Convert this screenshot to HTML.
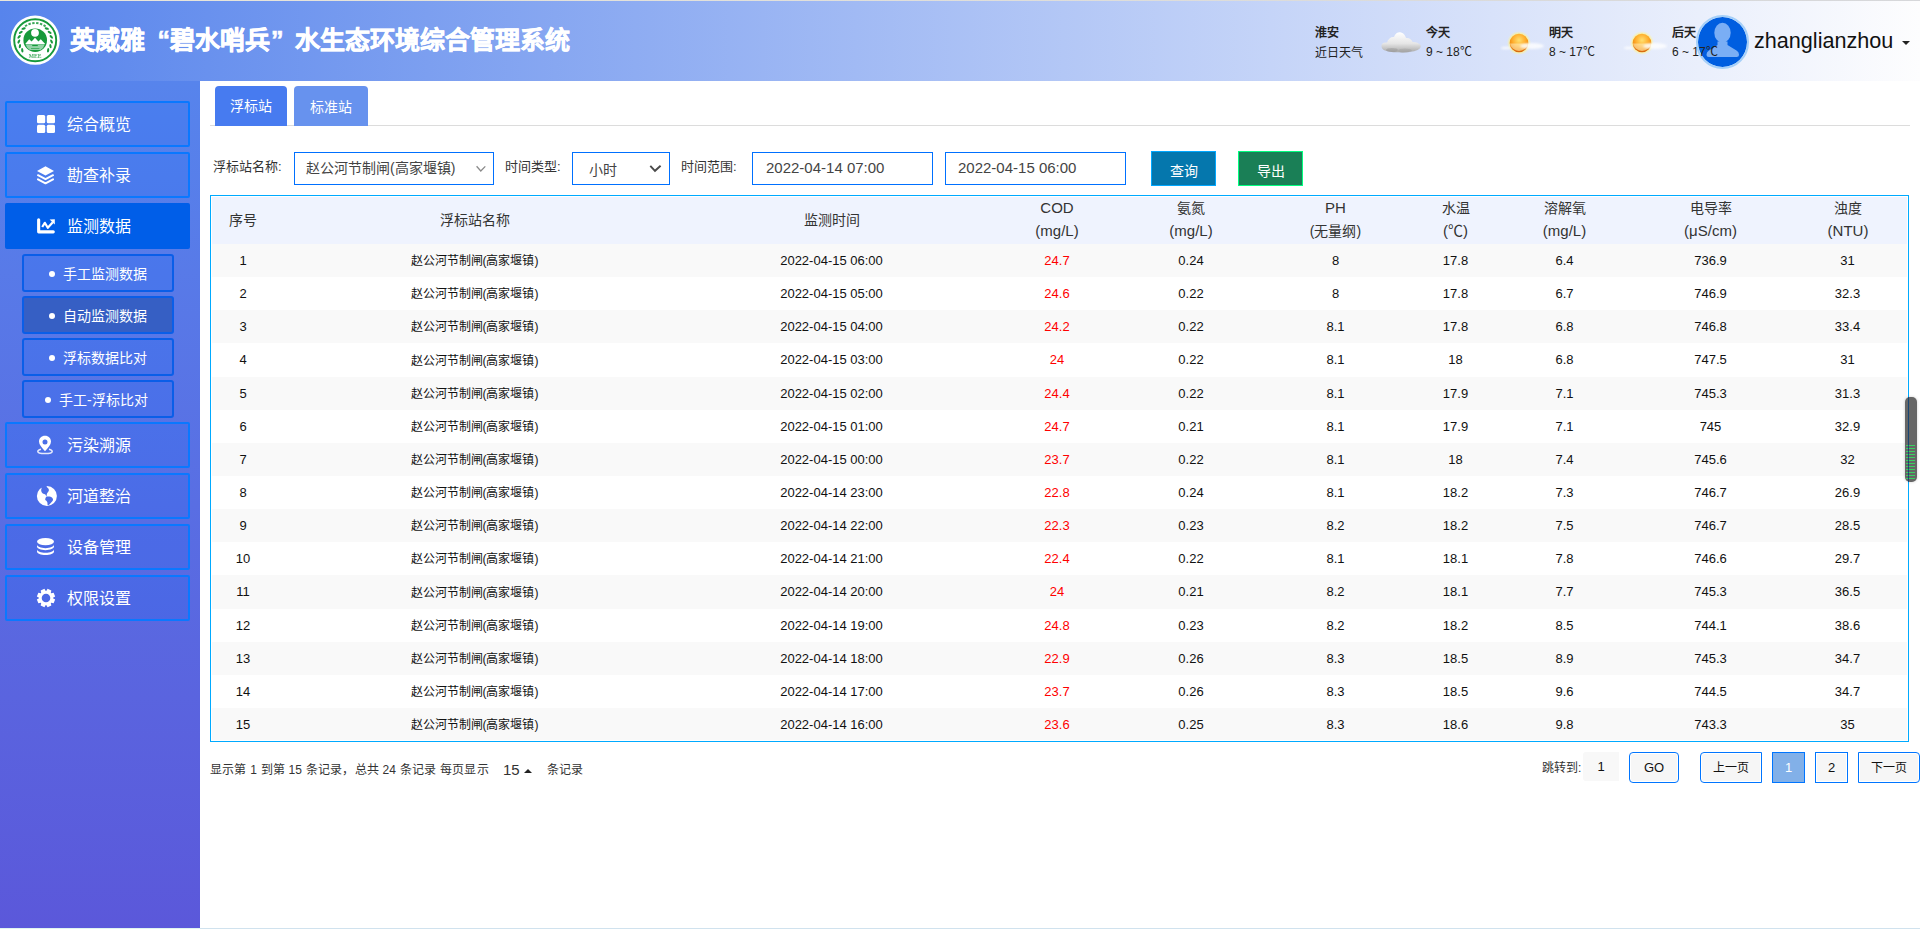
<!DOCTYPE html>
<html lang="zh-CN">
<head>
<meta charset="utf-8">
<title>英威雅“碧水哨兵”水生态环境综合管理系统</title>
<style>
*{box-sizing:border-box;margin:0;padding:0}
html,body{width:1920px;height:929px;overflow:hidden;background:#fff}
body{position:relative;font-family:"Liberation Sans",sans-serif;color:#333}
.abs{position:absolute}
#topline{position:absolute;left:0;top:0;width:1920px;height:1px;background:linear-gradient(90deg,#e9e6da,#d6d7da)}
#header{position:absolute;left:0;top:1px;width:1920px;height:80px;background:linear-gradient(90deg,#5784ec,#fdfdfe)}
#title{position:absolute;left:70px;top:21px;height:36px;line-height:36px;font-size:25px;font-weight:bold;-webkit-text-stroke:0.6px #fff;color:#fff;white-space:nowrap}
#title .q{display:inline-block;width:25px;text-align:right}
#title .q2{display:inline-block;width:25px;text-align:left;padding-left:1px}
.wt{position:absolute;font-size:12px;color:#222;white-space:nowrap;line-height:16px}
.wt b{font-weight:bold}
#avatar{position:absolute;left:1695.5px;top:15px;width:53.5px;height:53.5px;border-radius:50%;background:#005ee0;border:2px solid #a6d0f8;background-clip:padding-box}
#uname{position:absolute;left:1754px;top:27px;font-size:21.6px;line-height:28px;color:#111;white-space:nowrap}
#caret{position:absolute;left:1902px;top:41px;width:0;height:0;border-left:4.5px solid transparent;border-right:4.5px solid transparent;border-top:4px solid #222}
#sidebar{position:absolute;left:0;top:81px;width:200px;height:847px;background:linear-gradient(180deg,#5784ec,#5b58da)}
.mi{position:absolute;left:5px;width:185px;height:46px;border:2px solid #0a78ff;border-radius:2px;background:rgba(0,100,255,0.15);color:#fff;font-size:16px}
.mi.act{background:#005ee8;border-color:#005ee8}
.mi .tx{position:absolute;left:60px;top:1px;line-height:42px;white-space:nowrap}
.mi svg{position:absolute;left:30px;top:10px}
.si{position:absolute;left:22px;width:152px;height:38px;border:2px solid #0a5ee8;border-radius:3px;background:rgba(0,100,255,0.15);color:#fff;font-size:14px}
.si.act{background:#365fc4}
.si .tx{position:absolute;left:39px;top:1px;line-height:34px;white-space:nowrap}
.si .dot{position:absolute;left:25px;top:15px;width:6px;height:6px;border-radius:50%;background:#fff}
#bottomline{position:absolute;left:0;top:928px;width:1920px;height:1px;background:#d0e2ee}
#bottomline .l{position:absolute;left:0;top:0;width:200px;height:1px;background:#e0f4f0}
.tab{position:absolute;top:86px;height:40px;border-radius:4px 4px 0 0;color:#fff;font-size:14px;text-align:center;line-height:40px}
#tabline{position:absolute;left:210px;top:125px;width:1700px;height:1px;background:#dcdcdc}
.lbl{position:absolute;font-size:13px;color:#333;line-height:20px;white-space:nowrap;margin-top:1px}
.box{position:absolute;top:152px;height:33px;border:1px solid #0070ff;background:#fff;color:#444;white-space:nowrap}
.btn{position:absolute;top:151px;height:35px;color:#fff;font-size:14px;text-align:center;line-height:33px;padding-top:3px}
#table{position:absolute;left:210px;top:195px;width:1699px;height:547px;border:1px solid #00aaff;background:#fff;overflow:hidden}
#thead{position:absolute;left:212px;top:197px;width:1695px;height:47px;background:#eff3fe}
.th1{position:absolute;top:0;height:47px;line-height:46px;text-align:center;font-size:14px;color:#333;white-space:nowrap}
.th2{position:absolute;top:0;height:48px;text-align:center;font-size:14px;color:#333;white-space:nowrap}
.th2 .l1{position:absolute;left:0;right:0;top:-1px;line-height:24px;font-size:15px}
.th2 .l2{position:absolute;left:0;right:0;top:22px;line-height:24px;font-size:15px}
.tr{position:absolute;left:0;width:1695px}
.td{position:absolute;top:0;text-align:center;font-size:13px;color:#111;white-space:nowrap}
.td.cj{font-size:12px;margin-top:1px}
.td.red{color:#f00}
.pg{position:absolute;font-size:12px;color:#333;white-space:nowrap;line-height:20px}
.pb{position:absolute;top:752px;height:31px;border:1px solid #0075ff;box-shadow:inset 0 0 0 1px #fff;background:#f6f6f6;font-size:12px;color:#111;text-align:center;line-height:30px}
#scrollw{position:absolute;left:1905px;top:397px;width:12px;height:85px;border-radius:5px;background:#666;box-shadow:0 0 3px rgba(0,0,0,0.2)}
</style>
</head>
<body>
<div id="topline"></div>
<div id="header">
  <svg class="abs" style="left:10px;top:14px" width="50" height="50" viewBox="0 0 50 50"><circle cx="25.2" cy="25.2" r="24.6" fill="#fff"/><circle cx="25.2" cy="25.2" r="21" fill="none" stroke="#17993b" stroke-width="1.9"/><circle cx="25.2" cy="25.2" r="11.8" fill="#17993b"/><circle cx="25" cy="17.8" r="3.9" fill="#fff"/><path d="M15.2 28.9 L19.2 24.2 L21.6 26.6 L25 22.8 L28.4 26.6 L30.8 24.2 L35.2 28.9 Z" fill="#fff"/><path d="M15.6 29.2 L34.8 29.2 Q33.5 33.5 30.5 35 L19.8 35 Q16.8 33.5 15.6 29.2 Z" fill="#94d3a8"/><rect x="22.2" y="30" width="5.6" height="1.1" fill="#17993b"/><rect x="21" y="33" width="8.4" height="1" fill="#17993b" opacity="0.6"/><rect x="14.89" y="9.61" width="2.4" height="2" transform="rotate(328.0 16.09 10.61)" fill="#17993b" opacity="0.85"/><rect x="18.40" y="7.94" width="2.4" height="2" transform="rotate(341.0 19.60 8.94)" fill="#17993b" opacity="0.85"/><rect x="22.20" y="7.09" width="2.4" height="2" transform="rotate(354.0 23.40 8.09)" fill="#17993b" opacity="0.85"/><rect x="26.10" y="7.13" width="2.4" height="2" transform="rotate(367.0 27.30 8.13)" fill="#17993b" opacity="0.85"/><rect x="29.88" y="8.04" width="2.4" height="2" transform="rotate(380.0 31.08 9.04)" fill="#17993b" opacity="0.85"/><rect x="33.37" y="9.77" width="2.4" height="2" transform="rotate(393.0 34.57 10.77)" fill="#17993b" opacity="0.85"/><ellipse cx="12.28" cy="35.30" rx="2.2" ry="1.1" transform="rotate(262.0 12.28 35.30)" fill="#17993b"/><ellipse cx="9.93" cy="31.18" rx="2.2" ry="1.1" transform="rotate(278.6 9.93 31.18)" fill="#17993b"/><ellipse cx="8.86" cy="26.57" rx="2.2" ry="1.1" transform="rotate(295.2 8.86 26.57)" fill="#17993b"/><ellipse cx="9.15" cy="21.85" rx="2.2" ry="1.1" transform="rotate(311.8 9.15 21.85)" fill="#17993b"/><ellipse cx="10.77" cy="17.40" rx="2.2" ry="1.1" transform="rotate(328.4 10.77 17.40)" fill="#17993b"/><ellipse cx="13.60" cy="13.60" rx="2.2" ry="1.1" transform="rotate(345.0 13.60 13.60)" fill="#17993b"/><ellipse cx="38.12" cy="35.30" rx="2.2" ry="1.1" transform="rotate(98.0 38.12 35.30)" fill="#17993b"/><ellipse cx="40.47" cy="31.18" rx="2.2" ry="1.1" transform="rotate(81.4 40.47 31.18)" fill="#17993b"/><ellipse cx="41.54" cy="26.57" rx="2.2" ry="1.1" transform="rotate(64.8 41.54 26.57)" fill="#17993b"/><ellipse cx="41.25" cy="21.85" rx="2.2" ry="1.1" transform="rotate(48.2 41.25 21.85)" fill="#17993b"/><ellipse cx="39.63" cy="17.40" rx="2.2" ry="1.1" transform="rotate(31.6 39.63 17.40)" fill="#17993b"/><ellipse cx="36.80" cy="13.60" rx="2.2" ry="1.1" transform="rotate(15.0 36.80 13.60)" fill="#17993b"/><text x="25.2" y="42.6" font-size="5.6" font-family="Liberation Serif" font-weight="bold" text-anchor="middle" fill="#17993b" opacity="0.8">MEE</text></svg>
  <div id="title">英威雅<span class="q">“</span>碧水哨兵<span class="q2">”</span>水生态环境综合管理系统</div>
</div>
<!-- weather -->
<div class="wt" style="left:1315px;top:25px"><b>淮安</b></div>
<div class="wt" style="left:1315px;top:45px">近日天气</div>
<svg class="abs" style="left:1378px;top:28px" width="46" height="28" viewBox="0 0 46 28">
  <defs>
    <linearGradient id="cg" x1="0" y1="0" x2="0" y2="1"><stop offset="0" stop-color="#ffffff"/><stop offset="0.55" stop-color="#e6e6e6"/><stop offset="1" stop-color="#a8a8a8"/></linearGradient>
    <filter id="bl" x="-20%" y="-20%" width="140%" height="140%"><feGaussianBlur stdDeviation="0.55"/></filter>
  </defs>
  <g filter="url(#bl)" fill="url(#cg)">
  <path d="M3.5 18.5 C3 15.5 6 14 9 14.5 C10 10.5 13.5 8.5 16 9 C17.5 5 20.5 3.8 23 4.5 C26 5.2 27.5 8 28 10 C31 9.5 34 11.5 34.5 14 C38 14 42.5 15.5 42.8 18 C43 21 38 23.5 32 23.8 C28 24.5 25 24.8 21 24.2 C16 24.5 11 24 7 22.5 C4.5 21.5 3.6 20 3.5 18.5 Z"/>
  </g>
  <g filter="url(#bl)" opacity="0.35"><ellipse cx="14" cy="22" rx="6" ry="2" fill="#888"/><ellipse cx="27" cy="22.5" rx="7" ry="2" fill="#999"/></g>
</svg>
<div class="wt" style="left:1426px;top:25px"><b>今天</b></div>
<div class="wt" style="left:1426px;top:44px">9 ~ 18℃</div>
<svg class="abs" style="left:1500px;top:30px" width="48" height="26" viewBox="0 0 48 26">
  <defs>
    <radialGradient id="sg" cx="50%" cy="35%" r="60%"><stop offset="0" stop-color="#ffe070"/><stop offset="0.55" stop-color="#ffb030"/><stop offset="0.9" stop-color="#f08a10"/><stop offset="1" stop-color="#d86a10"/></radialGradient>
    <radialGradient id="sglow" cx="50%" cy="50%" r="50%"><stop offset="0.7" stop-color="#fff080" stop-opacity="1"/><stop offset="1" stop-color="#fff6a0" stop-opacity="0"/></radialGradient>
    <filter id="bl2" x="-30%" y="-30%" width="160%" height="160%"><feGaussianBlur stdDeviation="1"/></filter>
  </defs>
  <circle cx="19" cy="13" r="12" fill="url(#sglow)"/>
  <circle cx="19" cy="13" r="9.3" fill="url(#sg)"/>
  <path d="M9.9 13.5 L28.1 13.5 A9.3 9.3 0 0 1 9.9 13.5 Z" fill="#fff6d0" opacity="0.5"/>
  <g filter="url(#bl2)" opacity="0.8"><ellipse cx="32" cy="16" rx="12" ry="3" fill="#fff"/><ellipse cx="6" cy="18" rx="5" ry="1.2" fill="#fff"/></g>
</svg>
<div class="wt" style="left:1549px;top:25px"><b>明天</b></div>
<div class="wt" style="left:1549px;top:44px">8 ~ 17℃</div>
<svg class="abs" style="left:1623px;top:30px" width="48" height="26" viewBox="0 0 48 26">
  <circle cx="19" cy="13" r="12" fill="url(#sglow)"/>
  <circle cx="19" cy="13" r="9.3" fill="url(#sg)"/>
  <path d="M9.9 13.5 L28.1 13.5 A9.3 9.3 0 0 1 9.9 13.5 Z" fill="#fff6d0" opacity="0.5"/>
  <g filter="url(#bl2)" opacity="0.8"><ellipse cx="32" cy="16" rx="12" ry="3" fill="#fff"/><ellipse cx="6" cy="18" rx="5" ry="1.2" fill="#fff"/></g>
</svg>
<div id="avatar">
  <svg class="abs" style="left:0.3px;top:0px" width="50" height="50" viewBox="0 0 50 50">
    <ellipse cx="24.5" cy="15.8" rx="8.2" ry="10" fill="#7aaef5"/>
    <path d="M19.5 24.5 L19.5 28 L11 33.5 Q8.5 35 8.5 37.5 Q8.5 40 11 40 L38.5 40 Q41 40 41 37.5 Q41 35 38.5 33.5 L29.5 28 L29.5 24.5 Z" fill="#7aaef5"/>
  </svg>
</div>
<div class="wt" style="left:1672px;top:25px"><b>后天</b></div>
<div class="wt" style="left:1672px;top:44px">6 ~ 17℃</div>
<div id="uname">zhanglianzhou</div>
<div id="caret"></div>

<div id="sidebar"></div>
<div class="mi" style="top:101px">
  <svg width="19" height="19" viewBox="0 0 19 19" style="left:30px;top:12px"><rect x="0" y="0" width="8.2" height="8.2" rx="1.5" fill="#fff"/><rect x="9.8" y="0" width="8.2" height="8.2" rx="1.5" fill="#fff"/><rect x="0" y="9.8" width="8.2" height="8.2" rx="1.5" fill="#fff"/><rect x="9.8" y="9.8" width="8.2" height="8.2" rx="1.5" fill="#fff"/></svg>
  <div class="tx">综合概览</div>
</div>
<div class="mi" style="top:152px">
  <svg width="19" height="19" viewBox="0 0 19 19" style="left:30px;top:12px"><path d="M8.5 0.2 L17 4.9 L8.5 9.6 L0 4.9 Z" fill="#fff"/><path d="M1 9.2 L8.5 13.2 L16 9.2" stroke="#fff" stroke-width="2" fill="none" stroke-linejoin="round" stroke-linecap="round"/><path d="M1 13.3 L8.5 17.3 L16 13.3" stroke="#fff" stroke-width="2" fill="none" stroke-linejoin="round" stroke-linecap="round"/></svg>
  <div class="tx">勘查补录</div>
</div>
<div class="mi act" style="top:203px">
  <svg width="19" height="19" viewBox="0 0 19 19" style="left:30px;top:13px"><path d="M1.65 1.8 L1.65 13.85 L16.3 13.85" stroke="#fff" stroke-width="3.1" fill="none" stroke-linecap="round" stroke-linejoin="round"/><path d="M5.2 9 L7.8 4.8 L10.8 9.8 L15.8 4.2" stroke="#fff" stroke-width="2.2" fill="none" stroke-linejoin="round"/><path d="M12.6 1.6 L17.8 1.2 L17.8 6.6 Z" fill="#fff"/></svg>
  <div class="tx">监测数据</div>
</div>
<div class="si" style="top:254px"><div class="dot"></div><div class="tx">手工监测数据</div></div>
<div class="si act" style="top:296px"><div class="dot"></div><div class="tx">自动监测数据</div></div>
<div class="si" style="top:338px"><div class="dot"></div><div class="tx">浮标数据比对</div></div>
<div class="si" style="top:380px"><div class="dot" style="left:21px"></div><div class="tx" style="left:35px">手工-浮标比对</div></div>
<div class="mi" style="top:422px">
  <svg width="19" height="22" viewBox="0 0 19 22" style="left:30px;top:11px"><path d="M8 0.8 C4.4 0.8 2 3.4 2 6.6 C2 9.8 5 13 8 16.2 C11 13 14 9.8 14 6.6 C14 3.4 11.6 0.8 8 0.8 Z M8 4.5 A2.5 2.5 0 1 1 8 9.5 A2.5 2.5 0 1 1 8 4.5 Z" fill="#fff" fill-rule="evenodd"/><path d="M4 14.3 C1.8 14.8 0.8 15.5 0.8 16.5 C0.8 17.8 4 18.6 8 18.6 C12 18.6 15.2 17.8 15.2 16.5 C15.2 15.5 14.2 14.8 12 14.3" stroke="rgba(255,255,255,0.85)" stroke-width="1.5" fill="none"/></svg>
  <div class="tx">污染溯源</div>
</div>
<div class="mi" style="top:473px">
  <svg width="22" height="22" viewBox="0 0 22 22" style="left:29px;top:11px"><defs><mask id="gm"><rect x="0" y="0" width="22" height="22" fill="#000"/><circle cx="10.9" cy="10" r="10" fill="#fff"/><path d="M4 -1 L5.7 2 C5 3.5 4.8 5.5 6.5 7.2 C7.5 8 8.8 7.9 9.6 8.8 C10.1 9.6 10.2 10.5 10.3 11 C10.7 10 10.6 9 10.9 7.8 C11.3 6.5 12.8 5.5 12.9 4.2 C12.9 3 12 2.3 11.3 1.6 C10.8 1 10.5 0.6 10.6 -1 Z" fill="#000"/><path d="M10.2 11 C11.2 10.3 12.3 10.4 13.5 10.6 C14.8 10.9 16.5 11.6 17 13.2 C17.2 14.5 16.1 15.5 15.2 16.4 C14.3 17.3 13.6 18.5 12.2 19.2 C11.5 19.4 11.4 18.2 11.5 17.3 C11.5 16.3 10.8 15.3 10 14.6 C9.3 14 9 13.2 9.4 12.4 C9.6 11.8 9.9 11.3 10.2 11 Z" fill="#000"/></mask></defs><rect x="0" y="0" width="22" height="22" fill="#fff" mask="url(#gm)"/></svg>
  <div class="tx">河道整治</div>
</div>
<div class="mi" style="top:524px">
  <svg width="19" height="19" viewBox="0 0 19 19" style="left:30px;top:12px"><ellipse cx="8.5" cy="3.6" rx="8.5" ry="3.6" fill="#fff"/><path d="M0 6.6 C0 8.6 3.8 10.2 8.5 10.2 C13.2 10.2 17 8.6 17 6.6 L17 8.6 C17 10.6 13.2 12.2 8.5 12.2 C3.8 12.2 0 10.6 0 8.6 Z" fill="#fff"/><path d="M0 11.2 C0 13.2 3.8 14.8 8.5 14.8 C13.2 14.8 17 13.2 17 11.2 L17 13.4 C17 15.4 13.2 17 8.5 17 C3.8 17 0 15.4 0 13.4 Z" fill="#fff"/></svg>
  <div class="tx">设备管理</div>
</div>
<div class="mi" style="top:575px">
  <svg width="20" height="20" viewBox="0 0 20 20" style="left:29px;top:11px"><path id="gear" fill="#fff" fill-rule="evenodd" d="M17.00 10.23 L19.16 11.60 L17.61 15.35 L15.11 14.79 L14.95 14.95 L14.79 15.11 L15.35 17.61 L11.60 19.16 L10.23 17.00 L10.00 17.00 L9.77 17.00 L8.40 19.16 L4.65 17.61 L5.21 15.11 L5.05 14.95 L4.89 14.79 L2.39 15.35 L0.84 11.60 L3.00 10.23 L3.00 10.00 L3.00 9.77 L0.84 8.40 L2.39 4.65 L4.89 5.21 L5.05 5.05 L5.21 4.89 L4.65 2.39 L8.40 0.84 L9.77 3.00 L10.00 3.00 L10.23 3.00 L11.60 0.84 L15.35 2.39 L14.79 4.89 L14.95 5.05 L15.11 5.21 L17.61 4.65 L19.16 8.40 L17.00 9.77 L17.00 10.00 Z M14.3 10 A4.3 4.3 0 1 0 5.7 10 A4.3 4.3 0 1 0 14.3 10 Z"/></svg>
  <div class="tx">权限设置</div>
</div>
<div id="bottomline"><div class="l"></div></div>

<!-- main -->
<div class="tab" style="left:215px;width:72px;background:#477bf0">浮标站</div>
<div class="tab" style="left:294px;width:74px;background:#6792ee;line-height:42px">标准站</div>
<div id="tabline"></div>
<div class="tab" style="left:215px;width:72px;background:#477bf0;top:124px;height:2px;border-radius:0"></div>
<div class="tab" style="left:294px;width:74px;background:#6792ee;top:124px;height:2px;border-radius:0"></div>

<div class="lbl" style="left:213px;top:156px">浮标站名称:</div>
<div class="box" style="left:294px;width:200px;font-size:14px;line-height:30px;padding-left:11px">赵公河节制闸(高家堰镇)
  <svg class="abs" style="left:181px;top:11px" width="12" height="8" viewBox="0 0 12 8"><path d="M0.6 2.3 L4.8 7 L9.3 2.4" stroke="#8a8a8a" stroke-width="1.3" fill="none"/></svg>
</div>
<div class="lbl" style="left:505px;top:156px">时间类型:</div>
<div class="box" style="left:572px;width:98px;font-size:14px;line-height:35px;padding-left:16px">小时
  <svg class="abs" style="left:75px;top:11px" width="14" height="10" viewBox="0 0 14 10"><path d="M2.3 1.8 L7 6.8 L12.6 1.8" stroke="#4a4a4a" stroke-width="1.9" fill="none"/></svg>
</div>
<div class="lbl" style="left:681px;top:156px">时间范围:</div>
<div class="box" style="left:752px;width:181px;font-size:15px;line-height:30px;padding-left:13px">2022-04-14 07:00</div>
<div class="box" style="left:945px;width:181px;font-size:15px;line-height:30px;padding-left:12px">2022-04-15 06:00</div>
<div class="btn" style="left:1151px;width:65px;background:#0577ad;border:1px solid #00a8ff">查询</div>
<div class="btn" style="left:1238px;width:65px;background:#1a7f56;border:1px solid #00ff80">导出</div>

<div id="table">
</div>
<div id="thead">
<div class="th1" style="left:0px;width:62px">序号</div>
<div class="th1" style="left:62px;width:401px">浮标站名称</div>
<div class="th1" style="left:463px;width:313px">监测时间</div>
<div class="th2" style="left:776px;width:138px"><div class="l1">COD</div><div class="l2">(mg/L)</div></div>
<div class="th2" style="left:914px;width:130px"><div class="l1" style="font-size:14px">氨氮</div><div class="l2">(mg/L)</div></div>
<div class="th2" style="left:1044px;width:159px"><div class="l1">PH</div><div class="l2" style="font-size:14px">(无量纲)</div></div>
<div class="th2" style="left:1203px;width:81px"><div class="l1" style="font-size:14px">水温</div><div class="l2">(℃)</div></div>
<div class="th2" style="left:1284px;width:137px"><div class="l1" style="font-size:14px">溶解氧</div><div class="l2">(mg/L)</div></div>
<div class="th2" style="left:1421px;width:155px"><div class="l1" style="font-size:14px">电导率</div><div class="l2">(μS/cm)</div></div>
<div class="th2" style="left:1576px;width:120px"><div class="l1" style="font-size:14px">浊度</div><div class="l2">(NTU)</div></div>
</div>
<div style="position:absolute;left:212px;top:244px;width:1695px;height:496px;overflow:hidden">
<div class="tr" style="top:0px;height:33px;background:#f9f9f9">
<div class="td" style="left:0px;width:62px;line-height:33px">1</div>
<div class="td cj" style="left:62px;width:401px;line-height:33px">赵公河节制闸(高家堰镇)</div>
<div class="td" style="left:463px;width:313px;line-height:33px">2022-04-15 06:00</div>
<div class="td red" style="left:776px;width:138px;line-height:33px">24.7</div>
<div class="td" style="left:914px;width:130px;line-height:33px">0.24</div>
<div class="td" style="left:1044px;width:159px;line-height:33px">8</div>
<div class="td" style="left:1203px;width:81px;line-height:33px">17.8</div>
<div class="td" style="left:1284px;width:137px;line-height:33px">6.4</div>
<div class="td" style="left:1421px;width:155px;line-height:33px">736.9</div>
<div class="td" style="left:1576px;width:119px;line-height:33px">31</div>
</div>
<div class="tr" style="top:33px;height:33px;background:#ffffff">
<div class="td" style="left:0px;width:62px;line-height:33px">2</div>
<div class="td cj" style="left:62px;width:401px;line-height:33px">赵公河节制闸(高家堰镇)</div>
<div class="td" style="left:463px;width:313px;line-height:33px">2022-04-15 05:00</div>
<div class="td red" style="left:776px;width:138px;line-height:33px">24.6</div>
<div class="td" style="left:914px;width:130px;line-height:33px">0.22</div>
<div class="td" style="left:1044px;width:159px;line-height:33px">8</div>
<div class="td" style="left:1203px;width:81px;line-height:33px">17.8</div>
<div class="td" style="left:1284px;width:137px;line-height:33px">6.7</div>
<div class="td" style="left:1421px;width:155px;line-height:33px">746.9</div>
<div class="td" style="left:1576px;width:119px;line-height:33px">32.3</div>
</div>
<div class="tr" style="top:66px;height:33px;background:#f9f9f9">
<div class="td" style="left:0px;width:62px;line-height:33px">3</div>
<div class="td cj" style="left:62px;width:401px;line-height:33px">赵公河节制闸(高家堰镇)</div>
<div class="td" style="left:463px;width:313px;line-height:33px">2022-04-15 04:00</div>
<div class="td red" style="left:776px;width:138px;line-height:33px">24.2</div>
<div class="td" style="left:914px;width:130px;line-height:33px">0.22</div>
<div class="td" style="left:1044px;width:159px;line-height:33px">8.1</div>
<div class="td" style="left:1203px;width:81px;line-height:33px">17.8</div>
<div class="td" style="left:1284px;width:137px;line-height:33px">6.8</div>
<div class="td" style="left:1421px;width:155px;line-height:33px">746.8</div>
<div class="td" style="left:1576px;width:119px;line-height:33px">33.4</div>
</div>
<div class="tr" style="top:99px;height:34px;background:#ffffff">
<div class="td" style="left:0px;width:62px;line-height:34px">4</div>
<div class="td cj" style="left:62px;width:401px;line-height:34px">赵公河节制闸(高家堰镇)</div>
<div class="td" style="left:463px;width:313px;line-height:34px">2022-04-15 03:00</div>
<div class="td red" style="left:776px;width:138px;line-height:34px">24</div>
<div class="td" style="left:914px;width:130px;line-height:34px">0.22</div>
<div class="td" style="left:1044px;width:159px;line-height:34px">8.1</div>
<div class="td" style="left:1203px;width:81px;line-height:34px">18</div>
<div class="td" style="left:1284px;width:137px;line-height:34px">6.8</div>
<div class="td" style="left:1421px;width:155px;line-height:34px">747.5</div>
<div class="td" style="left:1576px;width:119px;line-height:34px">31</div>
</div>
<div class="tr" style="top:133px;height:33px;background:#f9f9f9">
<div class="td" style="left:0px;width:62px;line-height:33px">5</div>
<div class="td cj" style="left:62px;width:401px;line-height:33px">赵公河节制闸(高家堰镇)</div>
<div class="td" style="left:463px;width:313px;line-height:33px">2022-04-15 02:00</div>
<div class="td red" style="left:776px;width:138px;line-height:33px">24.4</div>
<div class="td" style="left:914px;width:130px;line-height:33px">0.22</div>
<div class="td" style="left:1044px;width:159px;line-height:33px">8.1</div>
<div class="td" style="left:1203px;width:81px;line-height:33px">17.9</div>
<div class="td" style="left:1284px;width:137px;line-height:33px">7.1</div>
<div class="td" style="left:1421px;width:155px;line-height:33px">745.3</div>
<div class="td" style="left:1576px;width:119px;line-height:33px">31.3</div>
</div>
<div class="tr" style="top:166px;height:33px;background:#ffffff">
<div class="td" style="left:0px;width:62px;line-height:33px">6</div>
<div class="td cj" style="left:62px;width:401px;line-height:33px">赵公河节制闸(高家堰镇)</div>
<div class="td" style="left:463px;width:313px;line-height:33px">2022-04-15 01:00</div>
<div class="td red" style="left:776px;width:138px;line-height:33px">24.7</div>
<div class="td" style="left:914px;width:130px;line-height:33px">0.21</div>
<div class="td" style="left:1044px;width:159px;line-height:33px">8.1</div>
<div class="td" style="left:1203px;width:81px;line-height:33px">17.9</div>
<div class="td" style="left:1284px;width:137px;line-height:33px">7.1</div>
<div class="td" style="left:1421px;width:155px;line-height:33px">745</div>
<div class="td" style="left:1576px;width:119px;line-height:33px">32.9</div>
</div>
<div class="tr" style="top:199px;height:33px;background:#f9f9f9">
<div class="td" style="left:0px;width:62px;line-height:33px">7</div>
<div class="td cj" style="left:62px;width:401px;line-height:33px">赵公河节制闸(高家堰镇)</div>
<div class="td" style="left:463px;width:313px;line-height:33px">2022-04-15 00:00</div>
<div class="td red" style="left:776px;width:138px;line-height:33px">23.7</div>
<div class="td" style="left:914px;width:130px;line-height:33px">0.22</div>
<div class="td" style="left:1044px;width:159px;line-height:33px">8.1</div>
<div class="td" style="left:1203px;width:81px;line-height:33px">18</div>
<div class="td" style="left:1284px;width:137px;line-height:33px">7.4</div>
<div class="td" style="left:1421px;width:155px;line-height:33px">745.6</div>
<div class="td" style="left:1576px;width:119px;line-height:33px">32</div>
</div>
<div class="tr" style="top:232px;height:33px;background:#ffffff">
<div class="td" style="left:0px;width:62px;line-height:33px">8</div>
<div class="td cj" style="left:62px;width:401px;line-height:33px">赵公河节制闸(高家堰镇)</div>
<div class="td" style="left:463px;width:313px;line-height:33px">2022-04-14 23:00</div>
<div class="td red" style="left:776px;width:138px;line-height:33px">22.8</div>
<div class="td" style="left:914px;width:130px;line-height:33px">0.24</div>
<div class="td" style="left:1044px;width:159px;line-height:33px">8.1</div>
<div class="td" style="left:1203px;width:81px;line-height:33px">18.2</div>
<div class="td" style="left:1284px;width:137px;line-height:33px">7.3</div>
<div class="td" style="left:1421px;width:155px;line-height:33px">746.7</div>
<div class="td" style="left:1576px;width:119px;line-height:33px">26.9</div>
</div>
<div class="tr" style="top:265px;height:33px;background:#f9f9f9">
<div class="td" style="left:0px;width:62px;line-height:33px">9</div>
<div class="td cj" style="left:62px;width:401px;line-height:33px">赵公河节制闸(高家堰镇)</div>
<div class="td" style="left:463px;width:313px;line-height:33px">2022-04-14 22:00</div>
<div class="td red" style="left:776px;width:138px;line-height:33px">22.3</div>
<div class="td" style="left:914px;width:130px;line-height:33px">0.23</div>
<div class="td" style="left:1044px;width:159px;line-height:33px">8.2</div>
<div class="td" style="left:1203px;width:81px;line-height:33px">18.2</div>
<div class="td" style="left:1284px;width:137px;line-height:33px">7.5</div>
<div class="td" style="left:1421px;width:155px;line-height:33px">746.7</div>
<div class="td" style="left:1576px;width:119px;line-height:33px">28.5</div>
</div>
<div class="tr" style="top:298px;height:33px;background:#ffffff">
<div class="td" style="left:0px;width:62px;line-height:33px">10</div>
<div class="td cj" style="left:62px;width:401px;line-height:33px">赵公河节制闸(高家堰镇)</div>
<div class="td" style="left:463px;width:313px;line-height:33px">2022-04-14 21:00</div>
<div class="td red" style="left:776px;width:138px;line-height:33px">22.4</div>
<div class="td" style="left:914px;width:130px;line-height:33px">0.22</div>
<div class="td" style="left:1044px;width:159px;line-height:33px">8.1</div>
<div class="td" style="left:1203px;width:81px;line-height:33px">18.1</div>
<div class="td" style="left:1284px;width:137px;line-height:33px">7.8</div>
<div class="td" style="left:1421px;width:155px;line-height:33px">746.6</div>
<div class="td" style="left:1576px;width:119px;line-height:33px">29.7</div>
</div>
<div class="tr" style="top:331px;height:34px;background:#f9f9f9">
<div class="td" style="left:0px;width:62px;line-height:34px">11</div>
<div class="td cj" style="left:62px;width:401px;line-height:34px">赵公河节制闸(高家堰镇)</div>
<div class="td" style="left:463px;width:313px;line-height:34px">2022-04-14 20:00</div>
<div class="td red" style="left:776px;width:138px;line-height:34px">24</div>
<div class="td" style="left:914px;width:130px;line-height:34px">0.21</div>
<div class="td" style="left:1044px;width:159px;line-height:34px">8.2</div>
<div class="td" style="left:1203px;width:81px;line-height:34px">18.1</div>
<div class="td" style="left:1284px;width:137px;line-height:34px">7.7</div>
<div class="td" style="left:1421px;width:155px;line-height:34px">745.3</div>
<div class="td" style="left:1576px;width:119px;line-height:34px">36.5</div>
</div>
<div class="tr" style="top:365px;height:33px;background:#ffffff">
<div class="td" style="left:0px;width:62px;line-height:33px">12</div>
<div class="td cj" style="left:62px;width:401px;line-height:33px">赵公河节制闸(高家堰镇)</div>
<div class="td" style="left:463px;width:313px;line-height:33px">2022-04-14 19:00</div>
<div class="td red" style="left:776px;width:138px;line-height:33px">24.8</div>
<div class="td" style="left:914px;width:130px;line-height:33px">0.23</div>
<div class="td" style="left:1044px;width:159px;line-height:33px">8.2</div>
<div class="td" style="left:1203px;width:81px;line-height:33px">18.2</div>
<div class="td" style="left:1284px;width:137px;line-height:33px">8.5</div>
<div class="td" style="left:1421px;width:155px;line-height:33px">744.1</div>
<div class="td" style="left:1576px;width:119px;line-height:33px">38.6</div>
</div>
<div class="tr" style="top:398px;height:33px;background:#f9f9f9">
<div class="td" style="left:0px;width:62px;line-height:33px">13</div>
<div class="td cj" style="left:62px;width:401px;line-height:33px">赵公河节制闸(高家堰镇)</div>
<div class="td" style="left:463px;width:313px;line-height:33px">2022-04-14 18:00</div>
<div class="td red" style="left:776px;width:138px;line-height:33px">22.9</div>
<div class="td" style="left:914px;width:130px;line-height:33px">0.26</div>
<div class="td" style="left:1044px;width:159px;line-height:33px">8.3</div>
<div class="td" style="left:1203px;width:81px;line-height:33px">18.5</div>
<div class="td" style="left:1284px;width:137px;line-height:33px">8.9</div>
<div class="td" style="left:1421px;width:155px;line-height:33px">745.3</div>
<div class="td" style="left:1576px;width:119px;line-height:33px">34.7</div>
</div>
<div class="tr" style="top:431px;height:33px;background:#ffffff">
<div class="td" style="left:0px;width:62px;line-height:33px">14</div>
<div class="td cj" style="left:62px;width:401px;line-height:33px">赵公河节制闸(高家堰镇)</div>
<div class="td" style="left:463px;width:313px;line-height:33px">2022-04-14 17:00</div>
<div class="td red" style="left:776px;width:138px;line-height:33px">23.7</div>
<div class="td" style="left:914px;width:130px;line-height:33px">0.26</div>
<div class="td" style="left:1044px;width:159px;line-height:33px">8.3</div>
<div class="td" style="left:1203px;width:81px;line-height:33px">18.5</div>
<div class="td" style="left:1284px;width:137px;line-height:33px">9.6</div>
<div class="td" style="left:1421px;width:155px;line-height:33px">744.5</div>
<div class="td" style="left:1576px;width:119px;line-height:33px">34.7</div>
</div>
<div class="tr" style="top:464px;height:33px;background:#f9f9f9">
<div class="td" style="left:0px;width:62px;line-height:33px">15</div>
<div class="td cj" style="left:62px;width:401px;line-height:33px">赵公河节制闸(高家堰镇)</div>
<div class="td" style="left:463px;width:313px;line-height:33px">2022-04-14 16:00</div>
<div class="td red" style="left:776px;width:138px;line-height:33px">23.6</div>
<div class="td" style="left:914px;width:130px;line-height:33px">0.25</div>
<div class="td" style="left:1044px;width:159px;line-height:33px">8.3</div>
<div class="td" style="left:1203px;width:81px;line-height:33px">18.6</div>
<div class="td" style="left:1284px;width:137px;line-height:33px">9.8</div>
<div class="td" style="left:1421px;width:155px;line-height:33px">743.3</div>
<div class="td" style="left:1576px;width:119px;line-height:33px">35</div>
</div>
</div>
<div id="scrollw">
  <div style="position:absolute;left:1px;top:48px;width:9px;height:34px;background:repeating-linear-gradient(180deg,#3ad060 0px,#3ad060 1px,transparent 1px,transparent 3px)"></div>
  <div style="position:absolute;left:3px;top:0;width:1px;height:85px;background:rgba(0,60,120,0.75)"></div>
</div>

<div class="pg" style="left:210px;top:760px;letter-spacing:0.2px">显示第 1 到第 15 条记录，总共 24 条记录 每页显示</div>
<div class="pg" style="left:503px;top:760px;font-size:15px">15</div>
<div class="abs" style="left:524px;top:769px;width:0;height:0;border-left:4px solid transparent;border-right:4px solid transparent;border-bottom:4px solid #222"></div>
<div class="pg" style="left:547px;top:760px">条记录</div>

<div class="pg" style="left:1542px;top:758px">跳转到:</div>
<div class="abs" style="left:1583px;top:752px;width:36px;height:29px;background:#f8f8f8;border-radius:3px 0 0 3px;font-size:13px;color:#111;text-align:center;line-height:29px">1</div>
<div class="pb" style="left:1629px;width:50px;border-radius:4px;font-size:13px">GO</div>
<div class="pb" style="left:1700px;width:62px;border-radius:4px 0 0 4px">上一页</div>
<div class="pb" style="left:1772px;width:33px;box-shadow:none;background:#82b0e8;color:#fff;font-size:13px">1</div>
<div class="pb" style="left:1815px;width:33px;font-size:13px">2</div>
<div class="pb" style="left:1858px;width:62px;border-radius:0 4px 4px 0">下一页</div>

</body>
</html>
